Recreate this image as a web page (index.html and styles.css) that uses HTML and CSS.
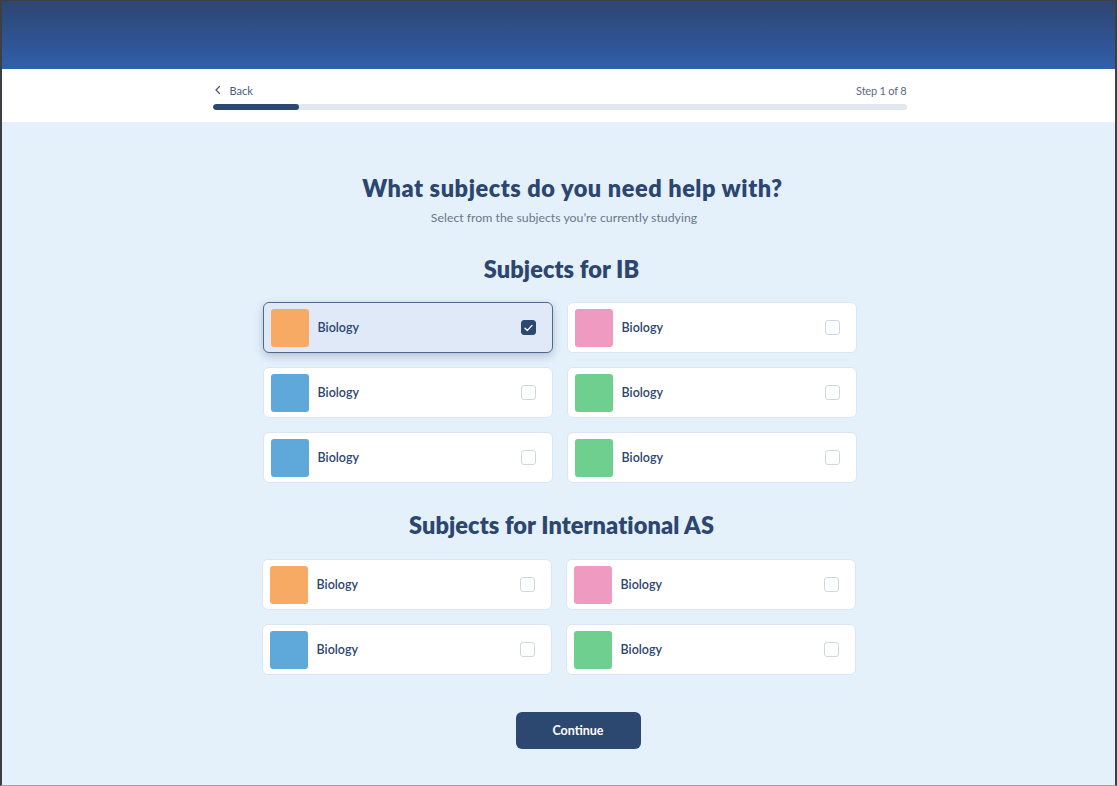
FILE: index.html
```html
<!DOCTYPE html>
<html lang="en">
<head>
<meta charset="utf-8">
<title>Subjects</title>
<link rel="stylesheet" href="styles.css">
</head>
<body>
<div class="frame">
  <header class="hero"></header>
  <div class="stepbar">
    <div class="stepbar-inner">
      <div class="stepbar-row">
        <a class="back" href="#">
          <svg class="chev" width="8" height="10" viewBox="0 0 8 10"><path d="M5.5 1.5 L2 5 L5.5 8.5" fill="none" stroke="#4a5a78" stroke-width="1.3" stroke-linecap="round" stroke-linejoin="round"/></svg>
          <span>Back</span>
        </a>
        <span class="step">Step 1 of 8</span>
      </div>
      <div class="progress"><div class="progress-fill" style="width:12.5%"></div></div>
    </div>
  </div>
  <main class="content">
    <h1 class="title">What subjects do you need help with?</h1>
    <p class="subtitle">Select from the subjects you’re currently studying</p>

    <h2 class="section-title">Subjects for IB</h2>
    <div class="grid">
      <label class="card selected"><span class="swatch orange"></span><span class="name">Biology</span><span class="check on"><svg width="9" height="8" viewBox="0 0 9 8"><path d="M1 4.2 L3.4 6.4 L8 1.4" fill="none" stroke="#fff" stroke-width="1.4" stroke-linecap="round" stroke-linejoin="round"/></svg></span></label>
      <label class="card"><span class="swatch pink"></span><span class="name">Biology</span><span class="check"></span></label>
      <label class="card"><span class="swatch blue"></span><span class="name">Biology</span><span class="check"></span></label>
      <label class="card"><span class="swatch green"></span><span class="name">Biology</span><span class="check"></span></label>
      <label class="card"><span class="swatch blue"></span><span class="name">Biology</span><span class="check"></span></label>
      <label class="card"><span class="swatch green"></span><span class="name">Biology</span><span class="check"></span></label>
    </div>

    <h2 class="section-title second">Subjects for International AS</h2>
    <div class="grid shift">
      <label class="card"><span class="swatch orange"></span><span class="name">Biology</span><span class="check"></span></label>
      <label class="card"><span class="swatch pink"></span><span class="name">Biology</span><span class="check"></span></label>
      <label class="card"><span class="swatch blue"></span><span class="name">Biology</span><span class="check"></span></label>
      <label class="card"><span class="swatch green"></span><span class="name">Biology</span><span class="check"></span></label>
    </div>

    <button class="continue">Continue</button>
  </main>
</div>
</body>
</html>
```
FILE: styles.css
```css
* { box-sizing: border-box; }
html, body { margin: 0; padding: 0; }
body {
  font-family: "Lato", "Inter", "Liberation Sans", sans-serif;
  color: #2c4670;
  background: #e4f1fb;
}
.frame {
  width: 1117px;
  height: 786px;
  border-top: 1px solid #3d3f44;
  border-left: 2px solid #3d3f44;
  border-right: 2px solid #3d3f44;
  border-bottom: 1px solid #9aa3ad;
  background: #e4f1fb;
  display: flex;
  flex-direction: column;
  overflow: hidden;
}
.hero {
  height: 68px;
  flex: none;
  background: linear-gradient(180deg, #2e4670 0%, #2f569a 70%, #3161aa 100%);
}
.stepbar {
  background: #fff;
  height: 53px;
  flex: none;
  display: flex;
  justify-content: center;
}
.stepbar-inner {
  width: 694px;
  margin-left: 2px;
  padding-top: 14px;
}
.stepbar-row {
  display: flex;
  justify-content: space-between;
  align-items: center;
  height: 14px;
  font-size: 11px;
}
.back {
  display: flex;
  align-items: center;
  gap: 8px;
  color: #4a5a78;
  text-decoration: none;
  padding-left: 1px;
}
.step { color: #5d6a7e; letter-spacing: -0.2px; }
.progress {
  margin-top: 7px;
  height: 6px;
  border-radius: 3px;
  background: #e2e8f0;
  overflow: hidden;
}
.progress-fill {
  height: 100%;
  border-radius: 3px;
  background: #2d4870;
}
.content {
  display: flex;
  flex-direction: column;
  align-items: center;
  padding-top: 52px;
}
.title {
  margin: 0 0 0 28px;
  font-size: 23.5px;
  line-height: 28px;
  font-weight: 800;
  letter-spacing: 0.55px;
  color: #2c4670;
}
.subtitle {
  margin: 8px 0 0 11px;
  font-size: 12.3px;
  line-height: 16px;
  color: #6b7789;
}
.section-title {
  margin: 29px 0 0 6px;
  font-size: 23.5px;
  line-height: 28px;
  font-weight: 800;
  letter-spacing: 0.1px;
  color: #2c4670;
}
.section-title.second { margin-top: 28px; }
.grid {
  margin-top: 19px;
  display: grid;
  grid-template-columns: 290px 290px;
  column-gap: 14px;
  row-gap: 14px;
  margin-left: 2px;
}
.grid.shift { margin-top: 20px; margin-left: 0; }
.card {
  height: 51px;
  background: #fff;
  border: 1px solid #dce6f0;
  border-radius: 6px;
  display: flex;
  align-items: center;
  padding: 0 16px 0 7px;
  cursor: pointer;
}
.card.selected {
  background: #dfe9f7;
  border-color: #51678b;
  box-shadow: 0 3px 8px rgba(44, 70, 112, 0.28);
}
.swatch {
  width: 38px;
  height: 38px;
  border-radius: 3px;
  flex: none;
}
.orange { background: #f6aa63; }
.pink { background: #ef9ac0; }
.blue { background: #5ea8da; }
.green { background: #6fcf8f; }
.name {
  margin-left: 9px;
  flex: 1;
  font-size: 12.5px;
  font-weight: 600;
  color: #2c4670;
}
.check {
  width: 15px;
  height: 15px;
  border: 1px solid #cdd7e3;
  border-radius: 3px;
  background: #fff;
  display: flex;
  align-items: center;
  justify-content: center;
}
.check.on {
  background: #2d4870;
  border-color: #2d4870;
}
.continue {
  margin-top: 37px;
  margin-left: 39px;
  width: 125px;
  height: 37px;
  border: none;
  border-radius: 6px;
  background: #2d4870;
  color: #fff;
  font-family: inherit;
  font-size: 12.5px;
  font-weight: 700;
  cursor: pointer;
}
```
